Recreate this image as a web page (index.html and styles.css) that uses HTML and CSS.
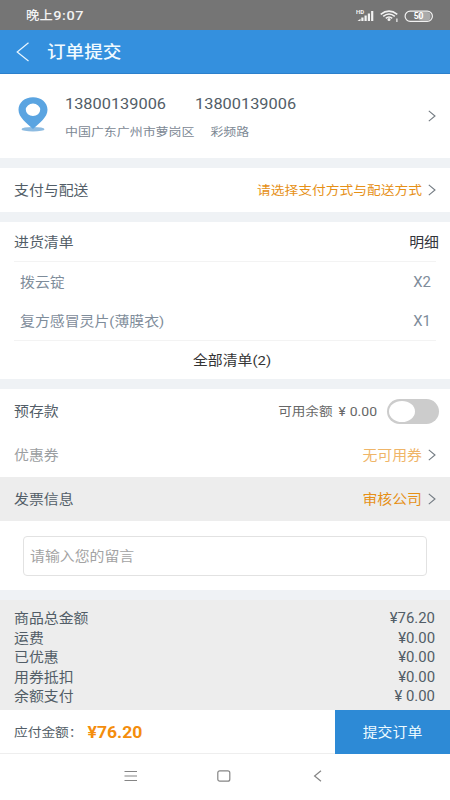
FILE: index.html
```html
<!DOCTYPE html>
<html lang="zh-CN">
<head>
<meta charset="utf-8">
<title>订单提交</title>
<link rel="stylesheet" href="styles.css">
</head>
<body>
<div class="status">
  <span class="t clock">晚上<b>9:07</b></span>
  <svg class="status-icons" width="80" height="16" viewBox="0 0 80 16">
    <g fill="#f2f2f2">
      <path d="M1.500 14L4.500 11.800V14Z"/><rect x="5.300" y="10.500" width="2.200" height="3.500"/><rect x="8.500" y="8.500" width="2.200" height="5.500"/><rect x="11.800" y="6.500" width="2.200" height="7.500"/><rect x="15.100" y="4" width="2.200" height="10"/>
      <circle cx="33" cy="12.600" r="1.500"/><rect x="40.300" y="11.500" width="1.200" height="3.500"/>
      <text class="hd" x="0" y="7">HD</text>
    </g>
    <g fill="none" stroke="#f2f2f2" stroke-width="1.600">
      <path d="M24.700 7.400Q33 .9 41.300 7.400M27.200 9.400Q33 4.600 38.800 9.400M29.800 11.400Q33 8.600 36.200 11.400"/>
    </g>
    <rect x="62" y="5" width="12.500" height="8.500" rx="3.500" fill="#aaa"/>
    <rect x="49.100" y="4.200" width="27.300" height="10.200" rx="5.100" fill="none" stroke="#f2f2f2" stroke-width="1.200"/>
    <text class="battery" x="57.700" y="12.200" fill="#fff">50</text>
  </svg>
</div>
<header class="header">
  <svg width="14" height="20" viewBox="0 0 14 20"><path d="M12.500 .8L1.200 10L12.500 19" fill="none" stroke="#e8f6ff" stroke-width="1.200"/></svg>
  <h1 class="t">订单提交</h1>
</header>
<main>
  <section class="address">
    <svg class="pin" width="30" height="36" viewBox="0 0 30 36">
      <ellipse cx="15" cy="32.200" rx="11.500" ry="2.300" fill="#8dbbe1"/>
      <path fill-rule="evenodd" fill="#5aa4e1" d="M15 .2C6.700.2.500 5.500.500 12.700C.500 20.500 8.500 25.500 15 32C21.500 25.500 29.500 20.500 29.500 12.700C29.500 5.500 23.300.2 15 .2ZM15 6.600A7.200 6.200 0 1 1 15 19A7.200 6.200 0 1 1 15 6.600Z"/>
    </svg>
    <div class="contact">
      <div class="phones"><span class="t">13800139006</span><span class="t">13800139006</span></div>
      <div class="place"><span class="t">中国广东广州市萝岗区</span><span class="t">彩频路</span></div>
    </div>
    <svg class="arrow" width="8" height="12" viewBox="0 0 8 12"><path d="M.8.800L7 6L.8 11.200"/></svg>
  </section>
  <section class="row gap">
    <span class="t">支付与配送</span>
    <span class="t value choose">请选择支付方式与配送方式</span>
    <svg class="arrow" width="8" height="12" viewBox="0 0 8 12"><path d="M.8.800L7 6L.8 11.200"/></svg>
  </section>
  <section class="list gap">
    <div class="list-head"><span class="t">进货清单</span><span class="t detail">明细</span></div>
    <div class="items">
      <div class="item"><span class="t">拨云锭</span><span class="t num">X2</span></div>
      <div class="item"><span class="t">复方感冒灵片(薄膜衣)</span><span class="t num">X1</span></div>
    </div>
    <div class="all"><span class="t">全部清单(2)</span></div>
  </section>
  <section class="gap">
    <div class="row">
      <span class="t">预存款</span>
      <span class="balance"><span class="t">可用余额</span><span class="t yen">¥</span><span class="t num">0.00</span></span>
      <span class="switch"></span>
    </div>
    <div class="row muted">
      <span class="t">优惠券</span>
      <span class="t value">无可用券</span>
      <svg class="arrow" width="8" height="12" viewBox="0 0 8 12"><path d="M.8.800L7 6L.8 11.200"/></svg>
    </div>
    <div class="row shaded">
      <span class="t">发票信息</span>
      <span class="t value">审核公司</span>
      <svg class="arrow" width="8" height="12" viewBox="0 0 8 12"><path d="M.8.800L7 6L.8 11.200"/></svg>
    </div>
    <div class="message"><div class="field"><span class="t">请输入您的留言</span></div></div>
  </section>
  <section class="totals gap">
    <div><span class="t">商品总金额</span><span class="t num">¥76.20</span></div>
    <div><span class="t">运费</span><span class="t num">¥0.00</span></div>
    <div><span class="t">已优惠</span><span class="t num">¥0.00</span></div>
    <div><span class="t">用券抵扣</span><span class="t num">¥0.00</span></div>
    <div><span class="t">余额支付</span><span class="t num">¥ 0.00</span></div>
  </section>
</main>
<footer class="pay">
  <div class="due"><span class="t">应付金额：</span><strong class="t">¥76.20</strong></div>
  <div class="submit"><span class="t">提交订单</span></div>
</footer>
<nav class="nav">
  <svg width="14" height="12" viewBox="0 0 14 12"><path d="M.500 1.500H13M.500 6H13M.500 10.500H13"/></svg>
  <svg width="14" height="12" viewBox="0 0 14 12"><rect x=".8" y=".8" width="12" height="10.400" rx="2"/></svg>
  <svg width="14" height="12" viewBox="0 0 14 12"><path d="M11 .8L4.600 6L11 11.200"/></svg>
</nav>
</body>
</html>
```
FILE: styles.css
```css
* { box-sizing: border-box; }
body {
  margin: 0;
  width: 450px;
  height: 800px;
  overflow: hidden;
  background: #eff2f5;
  color: #525d67;
  font: 14.9px/20px Roboto, "Noto Sans CJK SC", sans-serif;
}
svg { display: block; flex: none; }
.t { display: inline-block; transform: translateY(.4px) scaleY(.89); white-space: pre; }
.num { transform: translateY(.3px) scaleY(.93); }
.status {
  display: flex;
  align-items: center;
  justify-content: space-between;
  height: 30px;
  padding: 0 14px 0 26px;
  background: #757575;
  color: #f2f2f2;
}
.clock { font-size: 13.300px; font-weight: 500; letter-spacing: .3px; transform: translateY(1px) scaleY(.94); }
.clock b { font-size: 14.500px; font-weight: 500; letter-spacing: .6px; }
.status-icons { margin-top: -1px; }
.hd { font-size: 6px; font-weight: 700; }
.battery { font-size: 8.500px; font-weight: 700; }
.header {
  display: flex;
  align-items: center;
  gap: 17px;
  height: 44px;
  padding-left: 16px;
  background: #3490de;
  border-bottom: 1px solid #2b80cc;
  color: #f0faff;
}
h1 { margin: 0; font-size: 18.600px; font-weight: 500; }
.address {
  display: flex;
  align-items: center;
  height: 84px;
  padding: 0 14px 0 18px;
  background: #fff;
}
.pin { margin-top: -2px; }
.contact { flex: 1; margin: 4px 0 0 17px; }
.phones { display: flex; gap: 29px; font-size: 16.350px; margin-bottom: 8px; }
.place { display: flex; gap: 16px; font-size: 12.950px; color: #7c8894; }
.arrow { fill: none; stroke: #737b82; stroke-width: 1.100; }
.gap { margin-top: 10px; }
.row {
  display: flex;
  align-items: center;
  height: 44px;
  padding: 0 14px;
  background: #fff;
}
.value { margin: 0 6px 0 auto; color: #e69016; }
.choose { font-size: 13.750px; }
.list { height: 157px; padding: 0 14px; background: #fff; }
.list-head { display: flex; justify-content: space-between; align-items: center; height: 39px; }
.detail { margin-right: -3px; color: #33353b; }
.items { padding: 0 5px 0 6px; border: solid #f3f3f3; border-width: 1px 0; color: #7e8c9a; }
.item { display: flex; align-items: center; justify-content: space-between; height: 39px; }
.all { display: flex; align-items: center; justify-content: center; height: 38px; padding-left: 14px; color: #343434; }
.balance { display: flex; margin-left: auto; margin-right: 10px; font-size: 13.600px; color: #676767; }
.balance .yen { margin: 0 4px 0 6px; }
.balance .num { font-size: 14px; }
.switch { width: 52px; height: 25px; margin-right: -3px; border-radius: 13px; background: #ccc; }
.switch::before { content: ""; display: block; width: 26px; height: 21px; margin: 2px; border-radius: 50%; background: #fff; }
.muted { color: #9b9ea1; }
.muted .value { color: #efb568; }
.shaded { background: #ededed; }
.message { height: 69px; padding: 14.500px 23px; background: #fff; }
.field {
  display: flex;
  align-items: center;
  height: 40px;
  padding-left: 6px;
  border: 1px solid #e2e2e2;
  border-radius: 4px;
  color: #a3a3a3;
}
.totals { height: 110px; padding: 8px 15px 0 14px; background: #ededed; }
.totals div { display: flex; justify-content: space-between; height: 19.600px; }
.pay { display: flex; height: 44px; background: #fff; }
.due { display: flex; align-items: center; flex: 1; padding-left: 14px; border-bottom: 1px solid #eee; font-size: 13.700px; }
.due strong { margin-left: 5px; font-size: 17.600px; color: #f48d0c; }
.submit { display: flex; align-items: center; justify-content: center; width: 115px; background: #2d8ad6; color: #eefbff; }
.nav { display: flex; gap: 79px; align-items: center; height: 46px; padding: 0 0 2px 124px; background: #fff; }
.nav svg { fill: none; stroke: #858585; stroke-width: 1.200; }
```
